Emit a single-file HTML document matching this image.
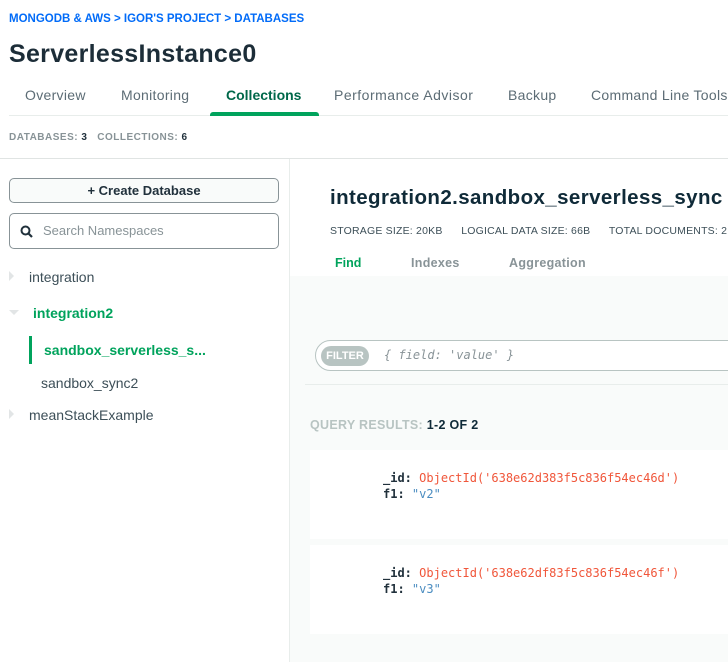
<!DOCTYPE html>
<html><head><meta charset="utf-8"><style>
*{margin:0;padding:0;box-sizing:border-box}
body{width:728px;height:662px;overflow:hidden;background:#fff;font-family:"Liberation Sans",sans-serif;position:relative;color:#21313c}
.a{position:absolute;white-space:nowrap}
.mono{font-family:"DejaVu Sans Mono","Liberation Mono",monospace;font-size:12px}
</style></head><body>
<div class="a" style="left:9px;top:13px;font-size:11.5px;font-weight:bold;color:#016bf8">MONGODB &amp; AWS &gt; IGOR'S PROJECT &gt; DATABASES</div>
<div class="a" style="left:9px;top:40px;font-size:25px;font-weight:bold;color:#1c2d38;letter-spacing:0.3px">ServerlessInstance0</div>
<div class="a" style="left:9px;top:115px;width:719px;height:1px;background:#e8edeb"></div>
<div class="a" style="top:87px;left:25px;font-size:14px;color:#5c6c75;letter-spacing:0.3px">Overview</div>
<div class="a" style="top:87px;left:121px;font-size:14px;color:#5c6c75;letter-spacing:0.3px">Monitoring</div>
<div class="a" style="top:87px;left:226px;font-size:14px;font-weight:bold;color:#00684a">Collections</div>
<div class="a" style="top:112px;left:210px;width:109px;height:4px;border-radius:3px 3px 0 0;background:#00a35c"></div>
<div class="a" style="top:87px;left:334px;font-size:14px;color:#5c6c75;letter-spacing:0.5px">Performance Advisor</div>
<div class="a" style="top:87px;left:508px;font-size:14px;color:#5c6c75;letter-spacing:0.3px">Backup</div>
<div class="a" style="top:87px;left:591px;font-size:14px;color:#5c6c75;letter-spacing:0.3px">Command Line Tools</div>
<div class="a" style="top:132px;left:9px;font-size:10px;font-weight:bold;color:#889397;letter-spacing:0.5px">DATABASES: <span style="color:#21313c">3</span>&nbsp;&nbsp; COLLECTIONS: <span style="color:#21313c">6</span></div>
<div class="a" style="top:158px;left:0;width:728px;height:1px;background:#e0e4e3"></div>
<div class="a" style="top:159px;left:289px;width:1px;height:503px;background:#e8edeb"></div>
<div class="a" style="left:9px;top:178px;width:270px;height:25px;border:1px solid #889397;border-radius:5px;background:#f9fbfa;text-align:center;font-size:13px;font-weight:bold;line-height:23px">+ Create Database</div>
<div class="a" style="left:9px;top:213px;width:270px;height:36px;border:1px solid #889397;border-radius:5px;font-size:13px;color:#889397;line-height:34px;padding-left:33px">Search Namespaces
<svg style="position:absolute;left:10px;top:11px" width="13" height="13" viewBox="0 0 13 13"><circle cx="5.5" cy="5.5" r="4" fill="none" stroke="#21313c" stroke-width="2"/><path d="M8.5 8.5L12 12" stroke="#21313c" stroke-width="2.2"/></svg></div>
<div class="a" style="left:9px;top:271px;width:0;height:0;border-left:5px solid #e2e5e6;border-top:5px solid transparent;border-bottom:5px solid transparent"></div>
<div class="a" style="left:29px;top:269px;font-size:14px;color:#3d4f58">integration</div>
<div class="a" style="left:9px;top:310px;width:0;height:0;border-top:5px solid #e2e5e6;border-left:5px solid transparent;border-right:5px solid transparent"></div>
<div class="a" style="left:33px;top:305px;font-size:14px;font-weight:bold;color:#00a35c">integration2</div>
<div class="a" style="left:29px;top:336px;width:3px;height:28px;background:#00a35c"></div>
<div class="a" style="left:44px;top:342px;font-size:14px;font-weight:bold;color:#00a35c">sandbox_serverless_s...</div>
<div class="a" style="left:41px;top:375px;font-size:14px;color:#3d4f58">sandbox_sync2</div>
<div class="a" style="left:9px;top:409px;width:0;height:0;border-left:5px solid #e2e5e6;border-top:5px solid transparent;border-bottom:5px solid transparent"></div>
<div class="a" style="left:29px;top:407px;font-size:14px;color:#3d4f58">meanStackExample</div>

<div class="a" style="left:330px;top:186px;font-size:20.5px;font-weight:bold;color:#0f2a38;letter-spacing:0.4px">integration2.sandbox_serverless_sync</div>
<div class="a" style="left:330px;top:225px;font-size:10.5px;color:#3d4f58;letter-spacing:0.2px">STORAGE SIZE: 20KB&nbsp;&nbsp;&nbsp;&nbsp;&nbsp; LOGICAL DATA SIZE: 66B&nbsp;&nbsp;&nbsp;&nbsp;&nbsp; TOTAL DOCUMENTS: 2</div>
<div class="a" style="left:335px;top:256px;font-size:12.5px;font-weight:bold;color:#00a35c">Find</div>
<div class="a" style="left:411px;top:256px;font-size:12.5px;font-weight:bold;color:#889397;letter-spacing:0.3px">Indexes</div>
<div class="a" style="left:509px;top:256px;font-size:12.5px;font-weight:bold;color:#889397;letter-spacing:0.3px">Aggregation</div>
<div class="a" style="left:290px;top:276px;width:438px;height:386px;background:#f9fbfa"></div>
<div class="a" style="left:315px;top:340px;width:430px;height:31px;border:1px solid #b8c4c2;border-radius:16px;background:#fff"></div>
<div class="a" style="left:321px;top:346px;width:48px;height:20px;border-radius:10px;background:#b8c4c2;color:#fff;font-size:11px;font-weight:bold;line-height:20px;text-align:center">FILTER</div>
<div class="a mono" style="left:384px;top:348px;font-style:italic;color:#889397">{ field: 'value' }</div>
<div class="a" style="left:305px;top:384px;width:423px;height:1px;background:#e8edeb"></div>
<div class="a" style="left:310px;top:418px;font-size:12.5px;font-weight:bold;color:#b8c4c2;letter-spacing:0.3px">QUERY RESULTS: <span style="color:#0f2a38">1-2 OF 2</span></div>
<div class="a" style="left:310px;top:450px;width:418px;height:89px;background:#fff"></div>
<div class="a" style="left:310px;top:545px;width:418px;height:89px;background:#fff"></div>
<div class="a mono" style="left:383px;top:470px;line-height:16px"><b style="color:#21313c">_id:</b> <span style="color:#f0563a">ObjectId('638e62d383f5c836f54ec46d')</span><br><b style="color:#21313c">f1:</b> <span style="color:#4a8cc0">"v2"</span></div>
<div class="a mono" style="left:383px;top:565px;line-height:16px"><b style="color:#21313c">_id:</b> <span style="color:#f0563a">ObjectId('638e62df83f5c836f54ec46f')</span><br><b style="color:#21313c">f1:</b> <span style="color:#4a8cc0">"v3"</span></div>
</body></html>
